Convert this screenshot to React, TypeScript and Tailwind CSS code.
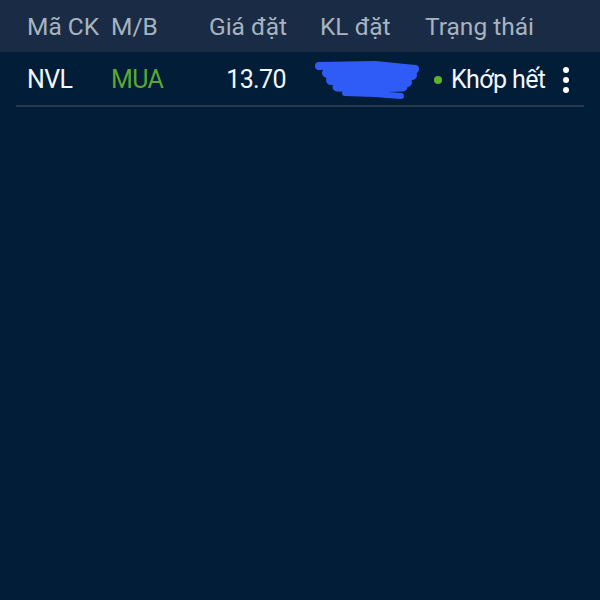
import React from "react";

export default function App() {
  return (
    <div
      className="w-[600px] h-[600px] bg-[#021d38] overflow-hidden"
      style={{ fontFamily: "Roboto, 'Noto Sans', sans-serif" }}
    >
      <div className="h-[52px] bg-[#1a2c45] flex items-center text-[24.5px] text-[#a7b3bf] leading-none pt-[3px]">
        <div className="w-[111px] pl-[27px]">Mã CK</div>
        <div className="w-[60px]">M/B</div>
        <div className="w-[116px] text-right">Giá đặt</div>
        <div className="w-[33px]" />
        <div className="w-[105px]">KL đặt</div>
        <div>Trạng thái</div>
      </div>
      <div className="mx-[16px] h-[55px] border-b-2 border-[#26394f] flex items-center text-[25px] tracking-[-0.6px] leading-none text-[#f4f6f8] pt-[2px]">
        <div className="w-[95px] pl-[11px]">NVL</div>
        <div className="w-[60px] text-[#5aa832]">MUA</div>
        <div className="w-[115px] text-right">13.70</div>
        <div className="w-[29px]" />
        <div className="w-[104px] h-[40px] flex items-center">
          <svg width="104" height="40" viewBox="0 0 104 40">
            <g stroke="#2f5cf7" strokeLinecap="round" strokeLinejoin="round" fill="none">
              <path d="M4 6 L60 5 L100 9" strokeWidth="8" />
              <path d="M12 13 L58 12 L97 15" strokeWidth="10" />
              <path d="M16 20 L92 22" strokeWidth="10" />
              <path d="M22 27 L60 28 L88 27" strokeWidth="9" />
              <path d="M30 33 L60 34 L86 36" strokeWidth="6" />
            </g>
          </svg>
        </div>
        <div className="w-[11px]" />
        <div className="w-[16px] flex justify-center">
          <div className="w-[8px] h-[8px] rounded-full bg-[#5fb02a]" />
        </div>
        <div className="w-[114px] pl-[5px]">Khớp hết</div>
        <div className="w-[12px] flex flex-col gap-[4px] items-center">
          <div className="w-[6px] h-[6px] rounded-full bg-white" />
          <div className="w-[6px] h-[6px] rounded-full bg-white" />
          <div className="w-[6px] h-[6px] rounded-full bg-white" />
        </div>
      </div>
    </div>
  );
}
